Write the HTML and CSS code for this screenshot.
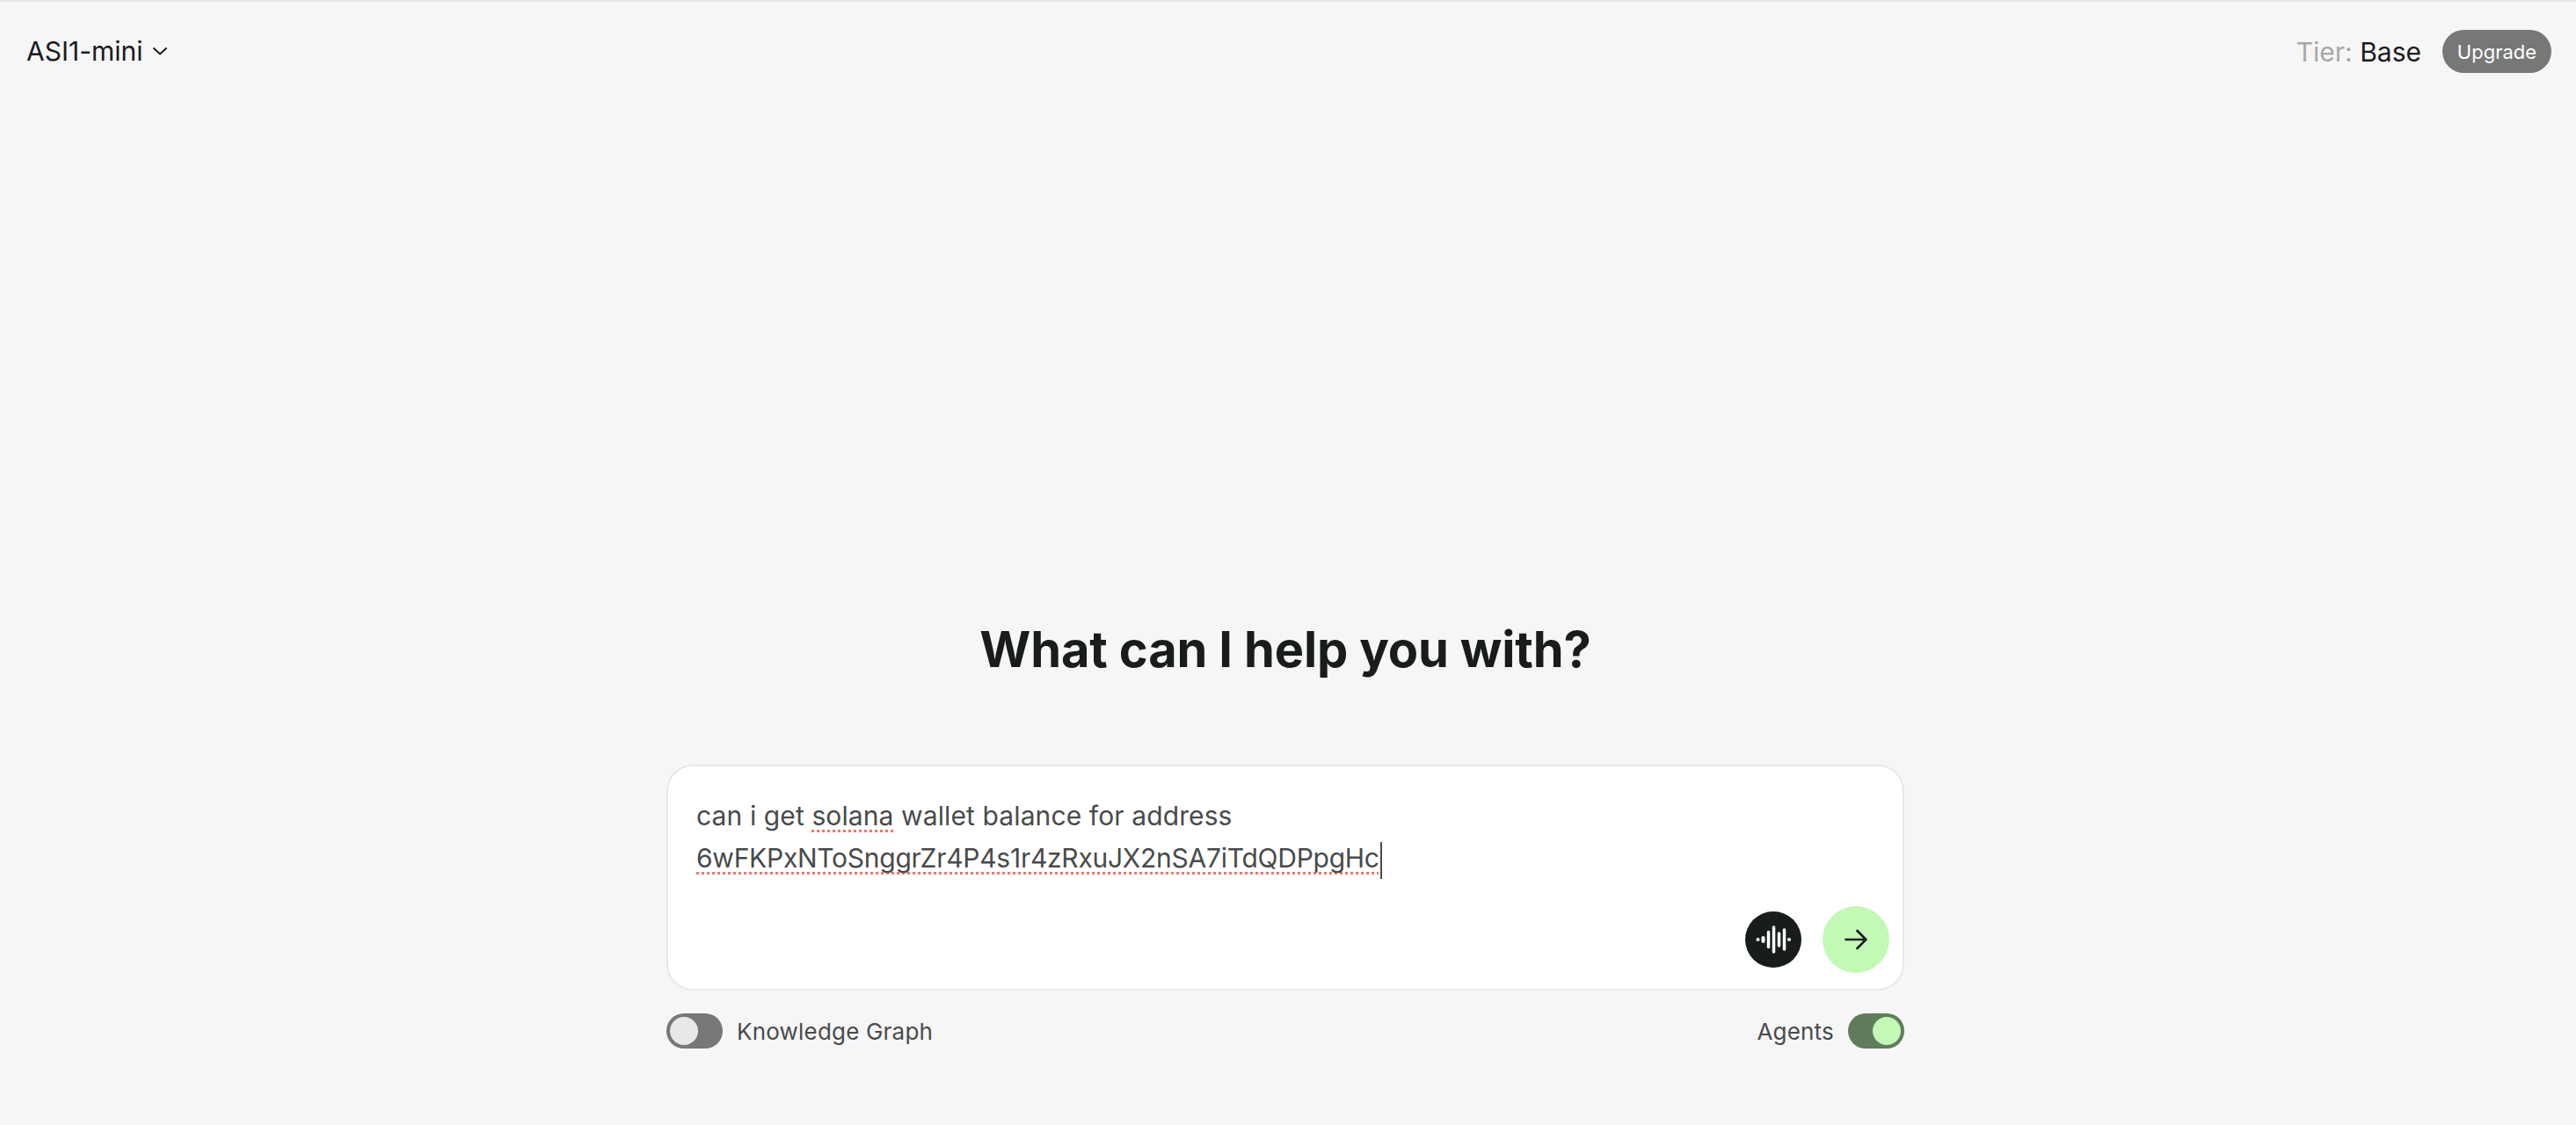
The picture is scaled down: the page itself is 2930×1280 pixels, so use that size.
FILE: index.html
```html
<!DOCTYPE html>
<html lang="en">
  <head>
    <meta charset="UTF-8" />
    <meta name="viewport" content="width=device-width, initial-scale=1.0" />
    <title>ASI1</title>
    <link rel="stylesheet" href="styles.css">
  </head>
  <body>
    <header class="topbar">
      <div class="model-select">
        <span>ASI1-mini</span>
        <svg class="chevron" width="18" height="10" viewBox="0 0 18 10" fill="none" stroke="#191c1c" stroke-width="2">
          <path d="M1.5 1.5 L9 8.5 L16.5 1.5" />
        </svg>
      </div>
      <div class="tier">
        <span class="tier-text"><span class="tier-label">Tier:</span> Base</span>
        <button class="upgrade" type="button">Upgrade</button>
      </div>
    </header>
    <main class="main">
      <h1 class="title">What can I help you with?</h1>
      <div class="prompt-box">
        <div class="prompt-text">
          <div class="line-one">can i get <span class="misspelled">solana</span> wallet balance for address</div>
          <div class="line-two"><span class="misspelled">6wFKPxNToSnggrZr4P4s1r4zRxuJX2nSA7iTdQDPpgHc</span><span class="caret"></span></div>
        </div>
        <div class="prompt-actions">
          <button class="voice" type="button">
            <svg width="40" height="32" viewBox="0 0 40 32" fill="none" stroke="#fff" stroke-linecap="round">
              <path d="M2.5 16 h.01" stroke-width="4" />
              <path d="M8.5 14 v4" stroke-width="4" />
              <path d="M14.5 7.5 v17" stroke-width="3.5" />
              <path d="M20.5 2 v28" stroke-width="3.5" />
              <path d="M26.5 9 v14" stroke-width="3.5" />
              <path d="M32.5 5 v22" stroke-width="3.5" />
              <path d="M38 16 h.01" stroke-width="4" />
            </svg>
          </button>
          <button class="send" type="button">
            <svg width="26" height="24" viewBox="0 0 26 24" fill="none" stroke="#191c1c" stroke-width="2.6" stroke-linecap="round">
              <path d="M1.5 12 H24 M14.5 2 L24.5 12 L14.5 22" />
            </svg>
          </button>
        </div>
      </div>
      <div class="toggles">
        <div class="toggle-row">
          <span class="switch"><span class="knob"></span></span>
          <span class="toggle-label">Knowledge Graph</span>
        </div>
        <div class="toggle-row">
          <span class="toggle-label">Agents</span>
          <span class="switch on"><span class="knob"></span></span>
        </div>
      </div>
    </main>
  </body>
</html>
```

FILE: styles.css
```css
* {
  box-sizing: border-box;
}
html,
body {
  margin: 0;
  height: 100%;
}
body {
  display: flex;
  flex-direction: column;
  background-color: #f6f6f6;
  border-top: 2px solid #e6e6eb;
  color: #191c1c;
  font-family: "Inter", "Liberation Sans", sans-serif;
  overflow: hidden;
}
.topbar {
  display: flex;
  justify-content: space-between;
  align-items: center;
  padding: 32px 28px 0 30px;
}
.model-select {
  display: flex;
  align-items: center;
  gap: 10px;
  margin-top: -2px;
  font-size: 30px;
}
.tier {
  display: flex;
  align-items: center;
  gap: 24px;
}
.tier-text {
  font-size: 30px;
}
.tier-label {
  color: #a6a8a8;
}
.upgrade {
  width: 124px;
  height: 49px;
  border: none;
  border-radius: 25px;
  background-color: #767876;
  color: #fff;
  font-family: inherit;
  font-size: 22px;
}
.main {
  flex: 1;
  display: flex;
  flex-direction: column;
  justify-content: flex-end;
  align-items: center;
  padding: 0 6px 87px 0;
}
.title {
  margin: 0 0 95px;
  font-size: 56px;
  font-weight: 700;
  line-height: 72px;
  letter-spacing: -0.15px;
}
.prompt-box {
  width: 1408px;
  height: 257px;
  display: flex;
  flex-direction: column;
  justify-content: space-between;
  padding: 32px 15px 18px 32px;
  border: 2px solid #e8e8e8;
  border-radius: 30px;
  background-color: #fff;
}
.prompt-text {
  color: #474b4b;
  font-size: 30px;
  line-height: 48px;
}
.line-one {
  letter-spacing: 0.11px;
}
.line-two {
  letter-spacing: -0.26px;
}
.misspelled {
  text-decoration: underline dotted #f4736b 3px;
  text-decoration-skip-ink: none;
  text-underline-offset: 5px;
}
.caret {
  display: inline-block;
  width: 2px;
  height: 42px;
  margin-left: 1px;
  background-color: #474b4b;
  vertical-align: middle;
}
.prompt-actions {
  display: flex;
  justify-content: flex-end;
  align-items: center;
  gap: 24px;
}
.prompt-actions button {
  display: flex;
  align-items: center;
  justify-content: center;
  padding: 0;
  border: none;
  border-radius: 50%;
}
.voice {
  width: 64px;
  height: 64px;
  background-color: #191c1c;
}
.send {
  width: 76px;
  height: 76px;
  background-color: #c2f9b4;
}
.toggles {
  width: 1408px;
  display: flex;
  justify-content: space-between;
  margin-top: 26px;
}
.toggle-row {
  display: flex;
  align-items: center;
  gap: 16px;
  color: #474b4b;
  font-size: 26px;
}
.toggle-label {
  letter-spacing: 0.2px;
}
.switch {
  width: 64px;
  height: 40px;
  display: flex;
  align-items: center;
  padding: 0 4px;
  border-radius: 20px;
  background-color: #767876;
}
.knob {
  width: 32px;
  height: 32px;
  border-radius: 50%;
  background-color: #e8e8e8;
}
.switch.on {
  justify-content: flex-end;
  background-color: #607c5a;
}
.switch.on .knob {
  background-color: #c2f9b4;
}
```
